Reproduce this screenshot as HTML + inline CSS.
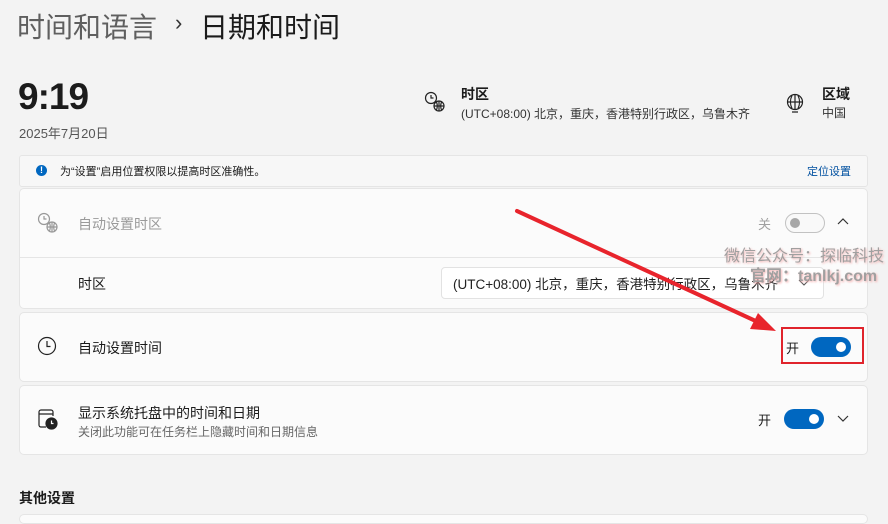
<!DOCTYPE html>
<html><head><meta charset="utf-8"><style>
*{margin:0;padding:0;box-sizing:border-box}
body{width:888px;height:516px;overflow:hidden;background:#f3f3f3;font-family:"Liberation Sans","Noto Sans CJK SC",sans-serif;color:#1b1b1b;position:relative}
.a{position:absolute;white-space:nowrap}
.card{position:absolute;left:19px;width:849px;background:#fbfbfb;border:1px solid #e5e5e5;border-radius:5px}
.tog{position:absolute;width:40px;height:20px;border-radius:10px}
.on{background:#0067c0}
.on::after{content:"";position:absolute;right:5px;top:5px;width:10px;height:10px;border-radius:50%;background:#fff}
.off{border:1px solid #8a8a8a;background:#f8f8f8;opacity:.5}
.off::after{content:"";position:absolute;left:4px;top:4px;width:10px;height:10px;border-radius:50%;background:#555}
</style></head><body>
<div class="a" style="left:17px;top:6px;font-size:28px;color:#5f5f5f">时间和语言</div>
<div class="a" style="left:175px;top:10px;font-size:22px;color:#333">›</div>
<div class="a" style="left:200px;top:6px;font-size:28px;color:#1b1b1b">日期和时间</div>
<div class="a" style="left:18px;top:76px;font-size:37px;font-weight:bold;letter-spacing:-1px">9:19</div>
<div class="a" style="left:19px;top:123px;font-size:13px;color:#555">2025年7月20日</div>

<svg class="a" style="left:424px;top:91px" width="22" height="22" viewBox="0 0 22 22" fill="none" stroke="#222" stroke-width="1.2"><circle cx="7" cy="7" r="5.5"/><path d="M7 4v3h2.5"/><circle cx="15" cy="15" r="5"/><path d="M10 15h10M15 10v10M12.5 11c1 2.5 1 5.5 0 8M17.5 11c-1 2.5-1 5.5 0 8"/></svg>
<div class="a" style="left:461px;top:84px;font-size:14px;font-weight:bold">时区</div>
<div class="a" style="left:461px;top:105px;font-size:12px;color:#333">(UTC+08:00) 北京，重庆，香港特别行政区，乌鲁木齐</div>
<svg class="a" style="left:785px;top:92px" width="20" height="22" viewBox="0 0 20 22" fill="none" stroke="#222" stroke-width="1.2"><circle cx="10" cy="10" r="7.5"/><path d="M2.5 10h15M10 2.5v15M7 3.5c-2 4-2 9 0 13M13 3.5c2 4 2 9 0 13M7 20h6"/></svg>
<div class="a" style="left:822px;top:84px;font-size:14px;font-weight:bold">区域</div>
<div class="a" style="left:822px;top:104px;font-size:12px;color:#333">中国</div>

<div class="a" style="left:19px;top:155px;width:849px;height:32px;background:#f7f7f7;border:1px solid #e5e5e5;border-radius:3px"></div>
<div class="a" style="left:36px;top:165px;width:11px;height:11px;border-radius:50%;background:#0067c0;color:#fff;font-size:9px;font-weight:bold;text-align:center;line-height:11px">!</div>
<div class="a" style="left:60px;top:163px;font-size:11px">为“设置”启用位置权限以提高时区准确性。</div>
<div class="a" style="left:807px;top:163px;font-size:11px;color:#0050a0">定位设置</div>

<div class="card" style="top:188px;height:121px"></div>
<div class="a" style="left:20px;top:257px;width:847px;height:1px;background:#e5e5e5"></div>
<svg class="a" style="left:37px;top:212px;opacity:.45" width="22" height="22" viewBox="0 0 22 22" fill="none" stroke="#222" stroke-width="1.2"><circle cx="7" cy="7" r="5.5"/><path d="M7 4v3h2.5"/><circle cx="15" cy="15" r="5"/><path d="M10 15h10M15 10v10M12.5 11c1 2.5 1 5.5 0 8M17.5 11c-1 2.5-1 5.5 0 8"/></svg>
<div class="a" style="left:78px;top:214px;font-size:14px;color:#9a9a9a">自动设置时区</div>
<div class="a" style="left:758px;top:214px;font-size:13px;color:#a0a0a0">关</div>
<div class="tog off" style="left:785px;top:213px"></div>
<svg class="a" style="left:837px;top:217px" width="12" height="10"><path d="M1 7l5-5 5 5" fill="none" stroke="#333" stroke-width="1.2"/></svg>
<div class="a" style="left:78px;top:274px;font-size:14px">时区</div>
<div class="a" style="left:441px;top:267px;width:383px;height:32px;background:#fff;border:1px solid #e2e2e2;border-radius:4px"></div>
<div class="a" style="left:453px;top:273px;font-size:13.5px;color:#222">(UTC+08:00) 北京，重庆，香港特别行政区，乌鲁木齐</div>
<svg class="a" style="left:798px;top:279px" width="12" height="8"><path d="M1 1l5 5 5-5" fill="none" stroke="#555" stroke-width="1.1"/></svg>

<div class="card" style="top:312px;height:70px"></div>
<svg class="a" style="left:37px;top:336px" width="20" height="20" viewBox="0 0 20 20" fill="none" stroke="#222" stroke-width="1.2"><circle cx="10" cy="10" r="8.5"/><path d="M10 5v5.5h3.5"/></svg>
<div class="a" style="left:78px;top:338px;font-size:14px">自动设置时间</div>
<div class="a" style="left:786px;top:338px;font-size:13px">开</div>
<div class="tog on" style="left:811px;top:337px"></div>
<div class="a" style="left:781px;top:327px;width:83px;height:37px;border:2px solid #e0242c"></div>

<div class="card" style="top:385px;height:70px"></div>
<svg class="a" style="left:37px;top:408px" width="22" height="24" viewBox="0 0 22 24" fill="none" stroke="#222" stroke-width="1.2"><path d="M9 19H4a2 2 0 0 1-2-2V4a2 2 0 0 1 2-2h10a2 2 0 0 1 2 2v4M2 6h14"/><circle cx="14.5" cy="15.5" r="5.5" fill="#222"/><path d="M14.5 12.5v3h2" stroke="#fff"/></svg>
<div class="a" style="left:78px;top:403px;font-size:14px">显示系统托盘中的时间和日期</div>
<div class="a" style="left:78px;top:423px;font-size:12px;color:#666">关闭此功能可在任务栏上隐藏时间和日期信息</div>
<div class="a" style="left:758px;top:410px;font-size:13px">开</div>
<div class="tog on" style="left:784px;top:409px"></div>
<svg class="a" style="left:837px;top:415px" width="12" height="8"><path d="M1 1l5 5 5-5" fill="none" stroke="#333" stroke-width="1.2"/></svg>

<div class="a" style="left:19px;top:488px;font-size:14px;font-weight:bold">其他设置</div>
<div class="a" style="left:19px;top:514px;width:849px;height:10px;background:#fbfbfb;border:1px solid #e5e5e5;border-radius:5px"></div>

<div class="a" style="left:724px;top:242px;font-size:16px;color:#a0a0a0;text-shadow:1px 1px 2px #f4b0b0">微信公众号：探临科技</div>
<div class="a" style="left:750px;top:262px;font-size:16px;color:#a0a0a0;font-weight:bold;text-shadow:1px 1px 2px #f4b0b0">官网：tanlkj.com</div>

<svg class="a" style="left:0;top:0" width="888" height="516"><line x1="517" y1="211" x2="760" y2="323" stroke="#e8242c" stroke-width="4" stroke-linecap="round"/><path d="M776 331l-26-2 8-16z" fill="#e8242c"/></svg>
</body></html>
